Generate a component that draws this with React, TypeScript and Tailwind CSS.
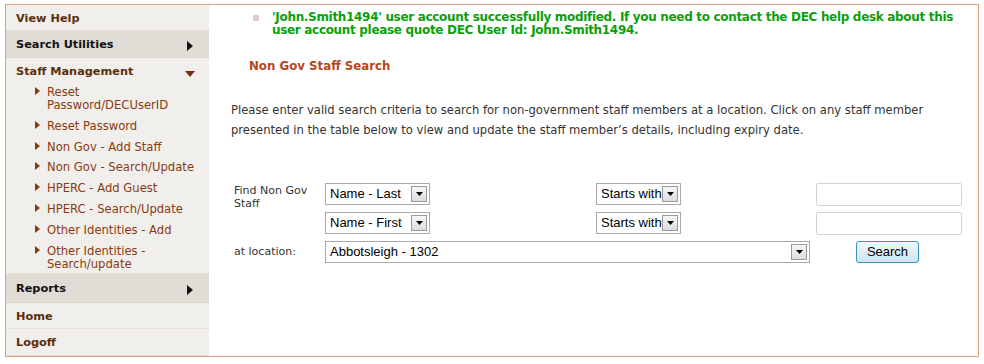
import React from 'react'

const verdana = { fontFamily: '"DejaVu Sans", Verdana, sans-serif' }
const arial = { fontFamily: '"Liberation Sans", Arial, sans-serif' }

type Sub = { label: string[] }

const subItems: Sub[] = [
  { label: ['Reset', 'Password/DECUserID'] },
  { label: ['Reset Password'] },
  { label: ['Non Gov - Add Staff'] },
  { label: ['Non Gov - Search/Update'] },
  { label: ['HPERC - Add Guest'] },
  { label: ['HPERC - Search/Update'] },
  { label: ['Other Identities - Add'] },
  { label: ['Other Identities -', 'Search/update'] },
]

function RightArrow() {
  return (
    <svg width="6" height="10" viewBox="0 0 6 10" className="shrink-0">
      <path d="M0 0 L6 5 L0 10 Z" fill="#111" />
    </svg>
  )
}

function DownArrow() {
  return (
    <svg width="10" height="6" viewBox="0 0 10 6" className="shrink-0">
      <path d="M0 0 L10 0 L5 6 Z" fill="#7a2e10" />
    </svg>
  )
}

function Bullet() {
  return (
    <svg width="5" height="8" viewBox="0 0 5 8" className="shrink-0 mt-[1px]">
      <path d="M0 0 L5 4 L0 8 Z" fill="#8a3a12" />
    </svg>
  )
}

function MenuRow({ label, active, arrow, h }: { label: string; active?: boolean; arrow?: boolean; h: string }) {
  return (
    <div
      className={`${h} shrink-0 flex items-center justify-between pt-[3px] pl-[10px] pr-[16px] border-b border-dotted border-[#d6d2ca] text-[11.3px] font-bold ${
        active ? 'bg-[#dfdcd5] text-[#111]' : 'text-[#5b2e0d]'
      }`}
    >
      <span>{label}</span>
      {arrow && <RightArrow />}
    </div>
  )
}

function Dropdown({ value, width }: { value: string; width: string }) {
  return (
    <div className={`${width} h-[22px] border border-[#a9a9a9] bg-white flex items-center justify-between pl-[4px] pr-[2px]`}>
      <span className="text-[13px] text-black leading-none whitespace-nowrap" style={arial}>
        {value}
      </span>
      <div className="w-[16px] h-[16px] border border-[#9a9a9a] bg-gradient-to-b from-[#f7f7f7] to-[#dcdcdc] flex items-center justify-center shrink-0">
        <svg width="7" height="4" viewBox="0 0 7 4">
          <path d="M0 0 L7 0 L3.5 4 Z" fill="#000" />
        </svg>
      </div>
    </div>
  )
}

function TextBox() {
  return <div className="w-[146px] h-[23px] border border-[#d4d4d4] rounded-[2px] bg-white" />
}

export default function App() {
  return (
    <div className="w-[984px] h-[364px] bg-white pt-[4px] pl-[5px]" style={verdana}>
      <div className="w-[974px] h-[353px] border border-[#dba07c] flex">
        <div className="w-[203px] bg-[#f1efeb] flex flex-col">
          <MenuRow label="View Help" h="h-[26px]" />
          <MenuRow label="Search Utilities" active arrow h="h-[27px]" />
          <div className="h-[216px] shrink-0 border-b border-dotted border-[#d6d2ca]">
            <div className="h-[27px] pt-[2px] flex items-center justify-between pl-[10px] pr-[14px] text-[11.3px] font-bold text-[#5b2e0d]">
              <span>Staff Management</span>
              <span className="mt-[2px]"><DownArrow /></span>
            </div>
            <ul className="mt-[1px] flex flex-col gap-[7.8px] text-[11.6px] leading-[13px] text-[#8a3a12]">
              {subItems.map((s) => (
                <li key={s.label.join(' ')} className="flex gap-[7px] pl-[29px]">
                  <Bullet />
                  <span>
                    {s.label.map((l) => (
                      <div key={l}>{l}</div>
                    ))}
                  </span>
                </li>
              ))}
            </ul>
          </div>
          <MenuRow label="Reports" active arrow h="h-[29px]" />
          <MenuRow label="Home" h="h-[26px]" />
          <MenuRow label="Logoff" h="h-[27px]" />
        </div>

        <div className="flex-1 pl-[22px] text-[11.6px] text-[#333]">
          <div className="flex pt-[6px] pl-[22px]">
            <div className="w-[6px] h-[6px] bg-[#e2c9d3] mt-[4px] mr-[13px] shrink-0" />
            <p className="text-[12px] leading-[13px] tracking-[-0.32px] font-bold text-[#0aa00a]">
              'John.Smith1494' user account successfully modified. If you need to contact the DEC help desk about this user account please quote DEC User Id: John.Smith1494.
            </p>
          </div>
          <h2 className="mt-[21px] pl-[18px] text-[11.8px] font-bold text-[#b5481b]">Non Gov Staff Search</h2>
          <p className="mt-[24px] leading-[20px] w-[720px]">
            Please enter valid search criteria to search for non-government staff members at a location. Click on any staff member presented in the table below to view and update the staff member’s details, including expiry date.
          </p>

          <div className="mt-[43px] pl-[3px] grid grid-cols-[91px_271px_220px_146px] gap-y-[6px] items-start text-[11px] text-[#333]">
            <div className="h-[22px] leading-[13px] pt-[1px]">Find Non Gov<br />Staff</div>
            <Dropdown value="Name - Last" width="w-[105px]" />
            <Dropdown value="Starts with" width="w-[85px]" />
            <TextBox />

            <div />
            <Dropdown value="Name - First" width="w-[105px]" />
            <Dropdown value="Starts with" width="w-[85px]" />
            <TextBox />

            <div className="leading-[22px]">at location:</div>
            <div className="col-span-2">
              <Dropdown value="Abbotsleigh - 1302" width="w-[485px]" />
            </div>
            <div className="ml-[40px]">
              <button className="w-[63px] h-[22px] rounded-[3px] border border-[#3c8fc7] bg-gradient-to-b from-[#f2f8fc] to-[#cfe4f3] text-[13px] text-black leading-none" style={arial}>
                Search
              </button>
            </div>
          </div>
        </div>
      </div>
    </div>
  )
}
